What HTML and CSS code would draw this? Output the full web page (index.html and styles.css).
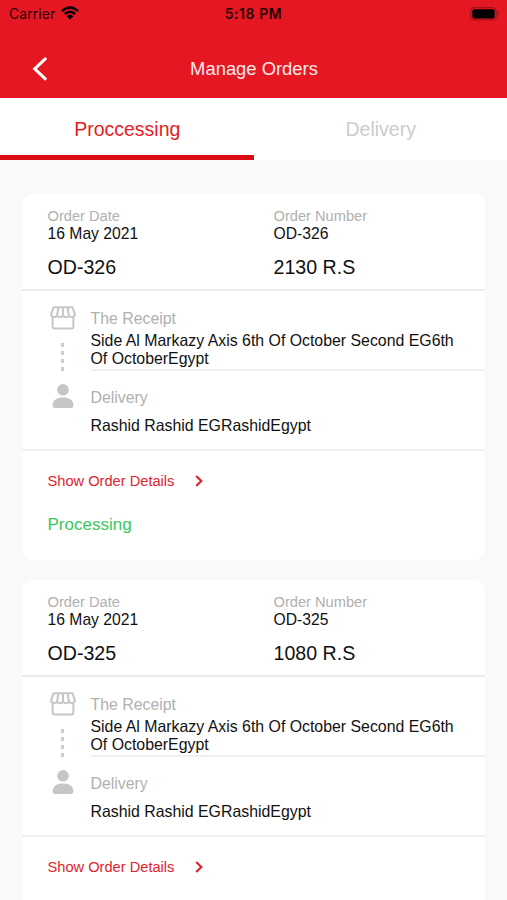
FILE: index.html
```html
<!DOCTYPE html>
<html lang="en">
<head>
<meta charset="utf-8">
<meta name="viewport" content="width=device-width, initial-scale=1">
<title>Manage Orders</title>
<link rel="stylesheet" href="styles.css">
</head>
<body>
<svg class="sprite" aria-hidden="true">
  <symbol id="store" viewBox="0 0 26 24">
    <path d="M3.6 1.2H22.4L24.9 8.3C25 11.6 20.4 12 18.9 9.4C17.7 12 14.2 12 13 9.4C11.8 12 8.3 12 7.1 9.4C5.6 12 1 11.6 1.1 8.3ZM8.4 1.5 7.1 9.5M13 1.5V9.5M17.6 1.5 18.9 9.5M2.6 11.5V20.5Q2.6 22.5 4.6 22.5H21.4Q23.4 22.5 23.4 20.5V11.5" fill="none" stroke="currentColor" stroke-width="2" stroke-linejoin="round"/>
  </symbol>
  <symbol id="person" viewBox="0 0 22 26">
    <circle cx="11" cy="6.8" r="5.8"/>
    <path d="M.6 22.6C.6 17 5 14.6 11 14.6S21.4 17 21.4 22.6Q21.4 25 19.4 25H2.6Q.6 25 .6 22.6Z"/>
  </symbol>
  <symbol id="chevron" viewBox="0 0 8 12">
    <path d="M1.2 1 6.3 6 1.2 11" fill="none" stroke="currentColor" stroke-width="2.2"/>
  </symbol>
</svg>
<header class="header">
  <div class="status">
    <div class="carrier"><span>Carrier</span>
      <svg class="wifi" viewBox="0 0 18 14"><path d="M1 5.2Q9-2 17 5.2M3.8 8Q9 3.4 14.2 8" fill="none" stroke="currentColor" stroke-width="2.4"/><path d="M5.7 10.2Q9 7.4 12.3 10.2L9 13.7Z"/></svg>
    </div>
    <time class="clock">5:18 PM</time>
    <svg class="battery" viewBox="0 0 30 14"><rect x=".7" y=".7" width="25.6" height="12.2" rx="3.4" fill="none" stroke="currentColor" stroke-opacity=".35"/><rect x="2.3" y="2.2" width="22.4" height="9.2" rx="2"/><path d="M27.8 4.8Q30 6.8 27.8 8.8Z" opacity=".45"/></svg>
  </div>
  <div class="navbar">
    <svg class="back" viewBox="0 0 16 26"><path d="M13.3 2.8 2.7 12.8 13.3 22.8" fill="none" stroke="currentColor" stroke-width="3" stroke-linecap="round"/></svg>
    <h1 class="title">Manage Orders</h1>
  </div>
</header>
<nav class="tabs">
  <div class="tab active">Proccessing</div>
  <div class="tab">Delivery</div>
</nav>
<main class="orders">
  <article class="card">
    <section class="summary">
      <div><div class="caption">Order Date</div><div class="value">16 May 2021</div><div class="total">OD-326</div></div>
      <div><div class="caption">Order Number</div><div class="value">OD-326</div><div class="total">2130 R.S</div></div>
    </section>
    <section class="route">
      <div class="track"><svg class="store"><use href="#store"/></svg><div class="dots"><i></i><i></i><i></i><i></i></div><svg class="person"><use href="#person"/></svg></div>
      <div class="stops">
        <div class="stop receipt"><div class="label">The Receipt</div><div class="address">Side Al Markazy Axis 6th Of October Second EG6th<br>Of OctoberEgypt</div></div>
        <div class="stop delivery"><div class="label">Delivery</div><div class="address">Rashid Rashid EGRashidEgypt</div></div>
      </div>
    </section>
    <section class="footer">
      <div class="details"><span>Show Order Details</span><svg class="chevron"><use href="#chevron"/></svg></div>
      <div class="state">Processing</div>
    </section>
  </article>
  <article class="card">
    <section class="summary">
      <div><div class="caption">Order Date</div><div class="value">16 May 2021</div><div class="total">OD-325</div></div>
      <div><div class="caption">Order Number</div><div class="value">OD-325</div><div class="total">1080 R.S</div></div>
    </section>
    <section class="route">
      <div class="track"><svg class="store"><use href="#store"/></svg><div class="dots"><i></i><i></i><i></i><i></i></div><svg class="person"><use href="#person"/></svg></div>
      <div class="stops">
        <div class="stop receipt"><div class="label">The Receipt</div><div class="address">Side Al Markazy Axis 6th Of October Second EG6th<br>Of OctoberEgypt</div></div>
        <div class="stop delivery"><div class="label">Delivery</div><div class="address">Rashid Rashid EGRashidEgypt</div></div>
      </div>
    </section>
    <section class="footer">
      <div class="details"><span>Show Order Details</span><svg class="chevron"><use href="#chevron"/></svg></div>
    </section>
  </article>
</main>
</body>
</html>
```
FILE: styles.css
```css
* { box-sizing: border-box; }
body {
  display: flex;
  flex-direction: column;
  margin: 0;
  height: 900px;
  overflow: hidden;
  background: #f9f9f9;
  color: #111;
  font-family: "Liberation Sans", Arial, sans-serif;
}
svg { display: block; fill: currentColor; }
.sprite { position: absolute; width: 0; height: 0; }

.header { flex: none; height: 98px; background: #e51723; }
.status {
  display: grid;
  grid-template-columns: 1fr auto 1fr;
  align-items: center;
  height: 27px;
  padding: 0 7px 0 9px;
  color: #250306;
  font-family: Inter, sans-serif;
  font-size: 13.8px;
}
.carrier { display: flex; align-items: center; gap: 6px; letter-spacing: .15px; }
.wifi { width: 18px; height: 14px; margin-top: -1px; color: #000; }
.clock { font-weight: 600; font-size: 14px; letter-spacing: .55px; margin-right: 2px; }
.battery { justify-self: end; width: 30px; height: 14px; color: #000; }
.navbar {
  display: grid;
  grid-template-columns: 33px 1fr 33px;
  align-items: center;
  height: 71px;
  padding-top: 13px;
  color: #fff;
}
.back { width: 16px; height: 26px; margin-left: 32px; }
.title { margin: 0 0 0 1px; text-align: center; font-size: 18.4px; font-weight: 400; line-height: 22px; color: #ffe9ea; }

.tabs { flex: none; display: grid; grid-template-columns: 1fr 1fr; height: 62px; background: #fff; }
.tab {
  height: 62px;
  padding: 20px 0 0 1px;
  text-align: center;
  font-size: 19.5px;
  line-height: 22px;
  color: #ccc;
}
.tab.active { color: #e51c24; border-bottom: 5px solid #db0b12; }

.orders { flex: 1; min-height: 0; display: grid; align-content: start; gap: 20px; padding: 34px 22px 0; overflow: hidden; }
.card { height: 366px; border-radius: 10px; background: #fff; overflow: hidden; }
.summary {
  display: grid;
  grid-template-columns: 226px 1fr;
  height: 97px;
  padding: 13px 0 0 25.5px;
  border-bottom: 2px solid #ebebeb;
}
.caption { font-size: 14.65px; line-height: 18px; color: #b0b0b0; }
.value { font-size: 15.7px; line-height: 18px; }
.total { margin-top: 13px; font-size: 19.6px; line-height: 22px; }
.route { display: flex; height: 160px; padding-left: 27.5px; border-bottom: 2px solid #f0f0f0; }
.track { display: flex; flex-direction: column; align-items: center; width: 26px; padding-top: 15px; color: #c4c6c7; }
.store { width: 26px; height: 24px; }
.dots { display: grid; gap: 4px; margin: 13px 0 12px; }
.dots i { width: 3px; height: 4px; background: #ccc; }
.person { width: 22px; height: 26px; }
.stops { flex: 1; margin-left: 15px; }
.receipt { height: 80px; padding-top: 18px; border-bottom: 2px solid #f0f0f0; }
.delivery { padding-top: 17px; }
.label { font-size: 15.85px; line-height: 20px; color: #b0b0b0; }
.address { font-size: 15.87px; line-height: 18px; white-space: nowrap; margin-top: 3px; }
.delivery .address { margin-top: 9px; }
.footer { padding: 20px 25.5px 0; }
.details { display: flex; align-items: center; gap: 21px; font-size: 14.65px; line-height: 20px; color: #e12330; }
.chevron { width: 8px; height: 12px; }
.state { margin-top: 24px; font-size: 17px; line-height: 20px; color: #3cc75a; }
```
